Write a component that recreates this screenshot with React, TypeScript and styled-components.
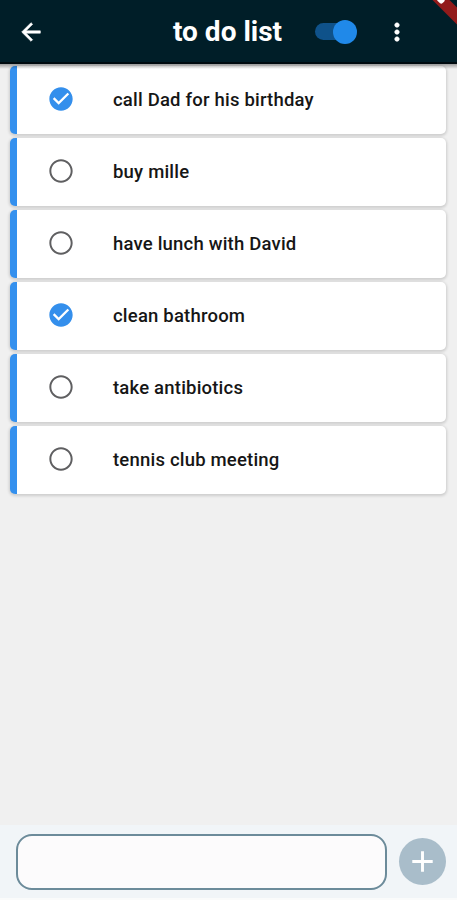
import React, { useState } from "react";
import styled, { createGlobalStyle } from "styled-components";

const GlobalStyle = createGlobalStyle`
  *, *::before, *::after { box-sizing: border-box; }
  body { margin: 0; background: #f0f0f0; font-family: Roboto, sans-serif; }
  button, input { font: inherit; border: 0; padding: 0; margin: 0; background: none; }
`;

const Screen = styled.div`
  display: flex;
  flex-direction: column;
  height: 900px;
  overflow: hidden;
  background: #f0f0f0;
`;

const Header = styled.header`
  position: relative;
  z-index: 1;
  flex: none;
  display: flex;
  align-items: center;
  height: 64px;
  padding: 1px 0 0 17px;
  overflow: hidden;
  color: #fff;
  background: #001e28;
  border-bottom: 2px solid #000b10;
`;

const HeaderShade = styled.div`
  position: relative;
  z-index: 2;
  flex: none;
  height: 5px;
  margin-bottom: -5px;
  background: linear-gradient(rgba(0, 0, 0, 0.35), rgba(0, 0, 0, 0));
`;

const IconButton = styled.button`
  display: flex;
  width: 28px;
  height: 28px;
  color: inherit;
`;

const Title = styled.h1`
  margin: 0 0 0 128px;
  width: 142px;
  font-size: 28px;
  line-height: 32px;
  font-weight: 700;
  letter-spacing: 0;
  white-space: nowrap;
`;

const Toggle = styled.button`
  display: flex;
  align-items: center;
  justify-content: flex-end;
  width: 40px;
  height: 17px;
  margin-right: 28px;
  border-radius: 9px;
  background: #0f528a;
`;

const Knob = styled.span`
  flex: none;
  width: 24px;
  height: 24px;
  margin-right: -2px;
  border-radius: 50%;
  background: #2089e9;
`;

const Ribbon = styled.span`
  position: absolute;
  top: 2px;
  right: -36.5px;
  width: 90px;
  height: 12px;
  transform: rotate(45deg);
  background: #921b1b;

  &::before {
    content: "";
    position: absolute;
    left: 30px;
    top: 3px;
    width: 7px;
    height: 6px;
    border-radius: 2px;
    background: #fff;
  }
`;

const List = styled.ul`
  flex: 1;
  display: flex;
  flex-direction: column;
  gap: 4.5px;
  margin: 0;
  padding: 2px 11px 0 10px;
  list-style: none;
`;

const Item = styled.li`
  flex: none;
  display: flex;
  align-items: center;
  height: 67.5px;
  padding-left: 30px;
  border-left: 7px solid #3490ee;
  border-radius: 5px;
  background: #fff;
  box-shadow: 0 1px 3px 1px rgba(0, 0, 0, 0.15);
`;

const Check = styled.button`
  display: flex;
  width: 28px;
  height: 28px;
  margin: 0 38px 1px 0;
`;

const Label = styled.span`
  font-size: 18.5px;
  line-height: 24px;
  font-weight: 500;
  letter-spacing: 0.2px;
  color: #161616;
`;

const Composer = styled.footer`
  flex: none;
  display: flex;
  align-items: center;
  gap: 12px;
  height: 75px;
  padding: 0 11px 0 16px;
  background: #f1f5f8;
  border-bottom: 2px solid #fafbfb;
`;

const Field = styled.input`
  flex: 1;
  min-width: 0;
  height: 56px;
  padding: 0 16px;
  border: 2px solid #6c8b9a;
  border-radius: 16px;
  outline: none;
  background: #fcfbfc;
  font-size: 18px;
`;

const AddButton = styled.button`
  flex: none;
  display: grid;
  place-items: center;
  width: 47px;
  height: 47px;
  border-radius: 50%;
  background: #a9bdca;
`;

const tasks = [
  { text: "call Dad for his birthday", done: true },
  { text: "buy mille", done: false },
  { text: "have lunch with David", done: false },
  { text: "clean bathroom", done: true },
  { text: "take antibiotics", done: false },
  { text: "tennis club meeting", done: false },
];

const materialPaths = {
  back: "M20 11H7.83l5.59-5.59L12 4l-8 8 8 8 1.41-1.41L7.83 13H20v-2z",
  more: "M12 8c1.1 0 2-.9 2-2s-.9-2-2-2-2 .9-2 2 .9 2 2 2zm0 2c-1.1 0-2 .9-2 2s.9 2 2 2 2-.9 2-2-.9-2-2-2zm0 6c-1.1 0-2 .9-2 2s.9 2 2 2 2-.9 2-2-.9-2-2-2z",
  checked:
    "M12 2C6.48 2 2 6.48 2 12s4.480 10 10 10 10-4.480 10-10S17.520 2 12 2zm-2 15l-5-5 1.410-1.410L10 14.170l7.590-7.590L19 8l-9 9z",
  unchecked:
    "M12 2C6.48 2 2 6.48 2 12s4.480 10 10 10 10-4.480 10-10S17.520 2 12 2zm0 18.300c-4.580 0-8.300-3.720-8.300-8.300s3.720-8.300 8.300-8.300 8.300 3.720 8.300 8.300-3.720 8.300-8.300 8.300z",
  add: "M19 13h-6v6h-2v-6H5v-2h6V5h2v6h6v2z",
};

interface IconProps {
  name: keyof typeof materialPaths;
  size?: number;
  color?: string;
  outline?: number;
}

function Icon({ name, size = 28, color = "currentColor", outline = 0 }: IconProps) {
  return (
    <svg width={size} height={size} viewBox="0 0 24 24" fill={color} stroke={color} strokeWidth={outline} aria-hidden="true">
      <path d={materialPaths[name]} />
    </svg>
  );
}

export default function App() {
  const [items, setItems] = useState(tasks);
  const toggle = (index: number) =>
    setItems(items.map((t, i) => (i === index ? { ...t, done: !t.done } : t)));

  return (
    <>
      <GlobalStyle />
      <Screen>
        <Header>
          <IconButton aria-label="Back"><Icon name="back" outline={0.5} /></IconButton>
          <Title>to do list</Title>
          <Toggle role="switch" aria-checked="true" aria-label="Show completed"><Knob /></Toggle>
          <IconButton aria-label="More options"><Icon name="more" outline={0.4} /></IconButton>
          <Ribbon />
        </Header>
        <HeaderShade />
        <List>
          {items.map((task, i) => (
            <Item key={task.text}>
              <Check role="checkbox" aria-checked={task.done} aria-label={task.text} onClick={() => toggle(i)}>
                <Icon name={task.done ? "checked" : "unchecked"} color={task.done ? "#348fec" : "#5f5f61"} />
              </Check>
              <Label>{task.text}</Label>
            </Item>
          ))}
        </List>
        <Composer>
          <Field aria-label="New task" />
          <AddButton aria-label="Add task"><Icon name="add" size={35} color="#fff" /></AddButton>
        </Composer>
      </Screen>
    </>
  );
}
